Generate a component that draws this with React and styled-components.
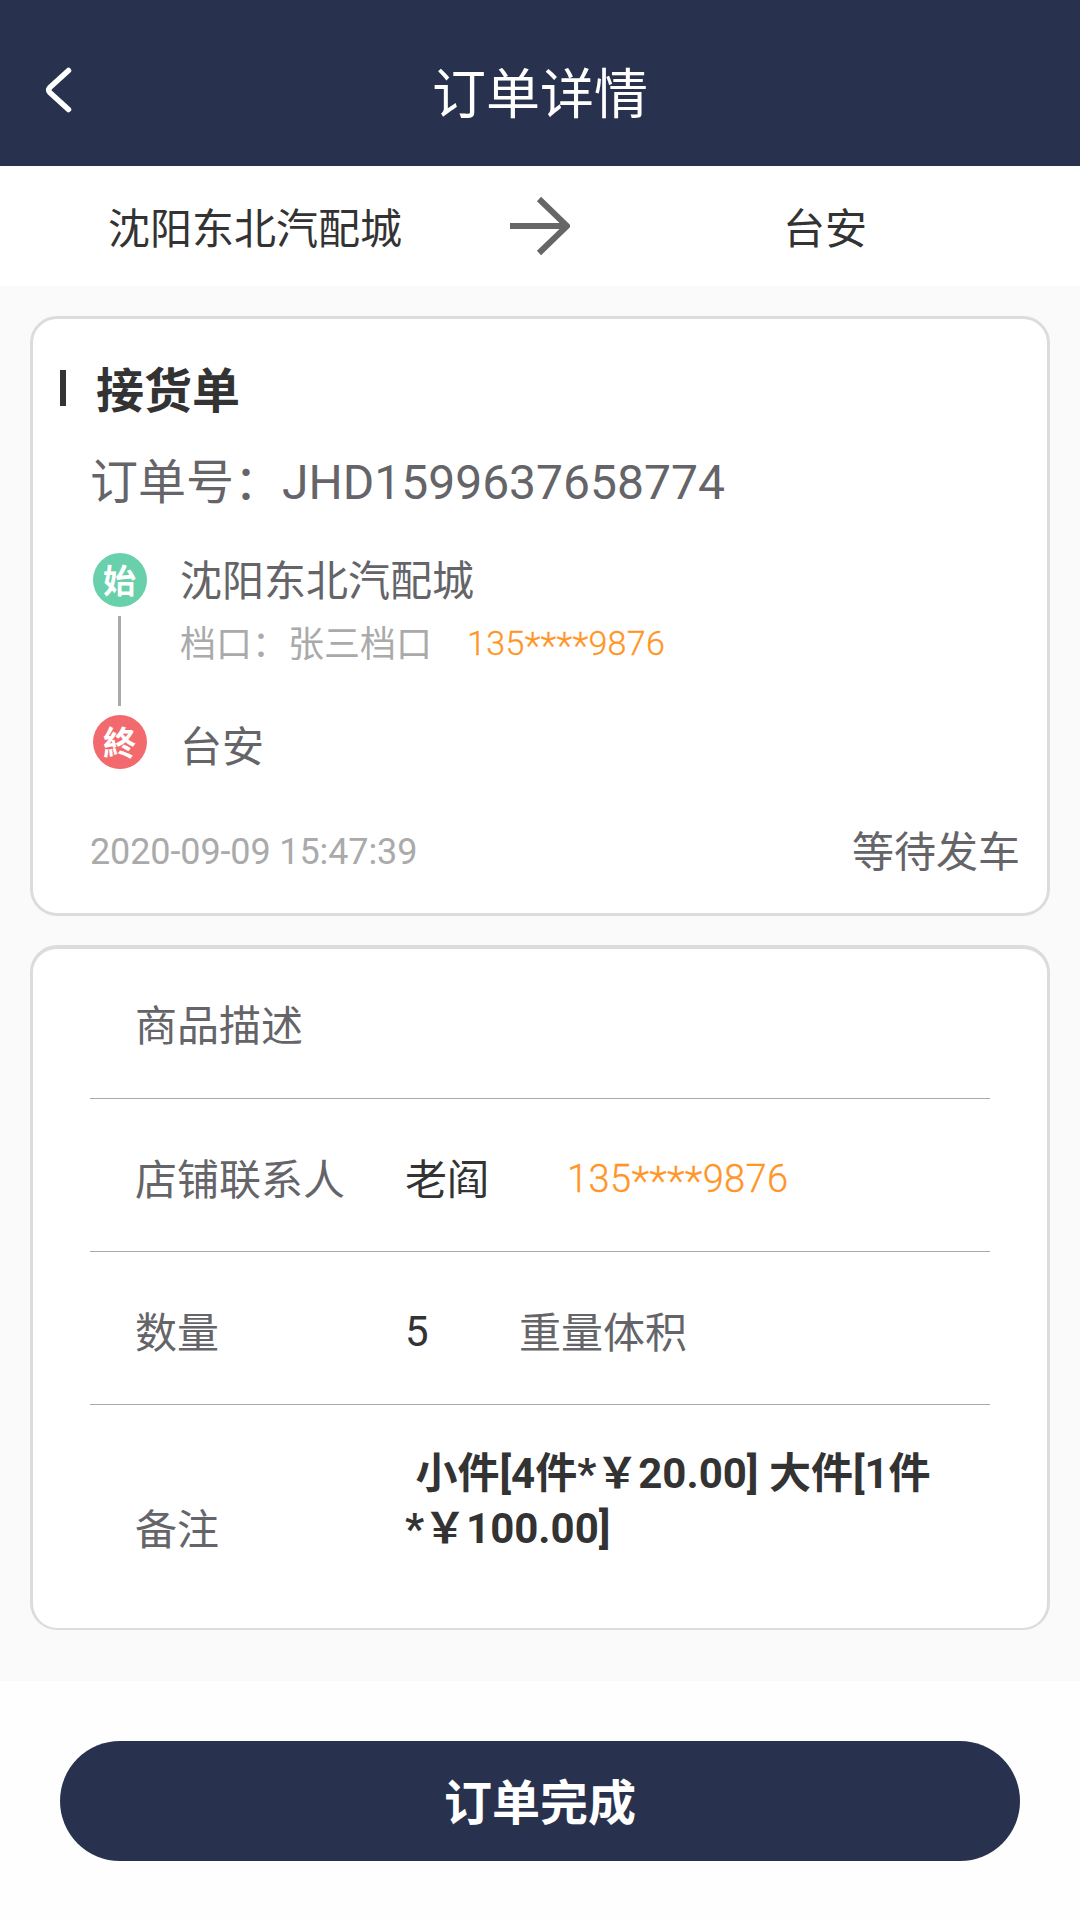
import React from 'react';
import styled, { createGlobalStyle } from 'styled-components';

const GlobalStyle = createGlobalStyle`
  * { box-sizing: border-box; }
  body {
    margin: 0;
    background: #fff;
    color: #333;
    font-family: Roboto, "Noto Sans CJK SC", sans-serif;
    font-size: 42px;
  }
`;

const Screen = styled.div`
  width: 1080px;
  height: 1920px;
  display: flex;
  flex-direction: column;
  overflow: hidden;
`;

const Header = styled.header`
  height: 166px;
  flex: none;
  padding: 26px 41px 0;
  display: grid;
  grid-template-columns: 36px 1fr 36px;
  align-items: center;
  background: #28314e;
  color: #fff;
`;

const BackIcon = styled.svg`
  width: 36px;
  height: 48px;
  margin-top: -12px;
  fill: none;
  stroke: #fff;
  stroke-width: 5.5;
  stroke-linecap: round;
  stroke-linejoin: round;
`;

const Title = styled.h1`
  margin: 0;
  font-size: 54px;
  line-height: 72px;
  font-weight: 400;
  text-align: center;
`;

const RouteBar = styled.div`
  height: 120px;
  flex: none;
  display: grid;
  grid-template-columns: 1fr 60px 1fr;
  align-items: center;
  text-align: center;
  line-height: 60px;
  padding-top: 8px;
`;

const ArrowIcon = styled.svg`
  width: 60px;
  height: 60px;
  margin-top: -8px;
  fill: none;
  stroke: #666;
  stroke-width: 6;
`;

const Content = styled.main`
  height: 1395px;
  flex: none;
  padding: 30px 30px 0;
  display: flex;
  flex-direction: column;
  gap: 29px;
  background: #fafafa;
`;

const Card = styled.section`
  height: ${(p) => p.$height}px;
  flex: none;
  border: 3px solid #dcdcdc;
  border-top-width: ${(p) => p.$top || 3}px;
  border-bottom-width: ${(p) => p.$bottom || 3}px;
  border-radius: 27px;
  background: #fff;
`;

const OrderHead = styled.div`
  height: 72px;
  margin-top: 33px;
  padding-left: 27px;
  display: flex;
  align-items: center;
  gap: 30px;
`;

const Tick = styled.i`
  width: 6px;
  height: 36px;
  background: #333;
`;

const Heading = styled.h2`
  margin: 0;
  padding-top: 8px;
  font-size: 48px;
  line-height: 72px;
  font-weight: 700;
`;

const OrderNo = styled.div`
  padding-left: 57px;
  margin-top: 23px;
  font-size: 48px;
  line-height: 72px;
  color: #646469;
`;

const Journey = styled.div`
  display: flex;
  margin-top: 34px;
  padding-left: 60px;
  gap: 33px;
`;

const Rail = styled.div`
  width: 54px;
  display: flex;
  flex-direction: column;
  align-items: center;
  gap: 9px;
`;

const Badge = styled.span`
  width: 54px;
  height: 54px;
  border-radius: 50%;
  background: ${(p) => p.$color};
  color: #fff;
  font-size: 33px;
  line-height: 57px;
  font-weight: 700;
  text-align: center;
  text-indent: -1px;
`;

const Line = styled.i`
  width: 3px;
  height: 90px;
  margin-right: 1px;
  background: #aaa;
`;

const Stops = styled.div`
  flex: 1;
  display: flex;
  flex-direction: column;
`;

const Place = styled.div`
  line-height: 60px;
  margin-top: ${(p) => p.$gap}px;
  color: #646469;
`;

const Stall = styled.div`
  height: 54px;
  display: flex;
  align-items: center;
  margin-top: 6px;
  gap: 35px;
  font-size: 36px;
  line-height: 54px;
  color: #aaa;
`;

const PhoneLink = styled.a`
  padding-bottom: ${(p) => p.$lift}px;
  font-size: ${(p) => p.$size}px;
  font-weight: 300;
  letter-spacing: 0.01em;
  color: #ff9526;
  -webkit-text-stroke: 0.3px #ff9526;
`;

const Mask = styled.span`
  font-size: 1.09em;
  line-height: 1;
  letter-spacing: 0.006em;
  vertical-align: -0.08em;
`;

const OrderFoot = styled.footer`
  margin-top: 43px;
  padding: 0 27px 0 57px;
  display: flex;
  align-items: center;
  justify-content: space-between;
  line-height: 60px;
  color: #646469;
`;

const Time = styled.time`
  font-size: 36px;
  letter-spacing: -0.12px;
  color: #aaa;
`;

const Status = styled.span`
  padding-top: 2px;
`;

const Row = styled.div`
  height: ${(p) => p.$height || 153}px;
  margin: 0 57px;
  padding: ${(p) => p.$top || 11}px 0 0 45px;
  display: flex;
  align-items: center;
  border-bottom: ${(p) => (p.$last ? 0 : 1)}px solid #aaa;
  line-height: 60px;
`;

const Label = styled.span`
  width: 270px;
  flex: none;
  color: #646469;
`;

const Value = styled.span`
  width: ${(p) => p.$width}px;
  flex: none;
  padding-bottom: ${(p) => p.$lift || 0}px;
`;

const Remark = styled.p`
  width: 540px;
  margin: 0 0 59px;
  font-weight: 700;
  line-height: 55px;
  white-space: pre-wrap;
`;

const Footer = styled.footer`
  flex: 1;
  padding: 60px;
  background: #fefefe;
`;

const DoneButton = styled.button`
  display: block;
  width: 100%;
  height: 120px;
  padding: 0 0 4px;
  border: 0;
  border-radius: 60px;
  background: #28314e;
  color: #fff;
  font: inherit;
  font-size: 48px;
  font-weight: 700;
`;

function Phone({ size, lift }) {
  return (
    <PhoneLink $size={size} $lift={lift}>
      135<Mask>****</Mask>9876
    </PhoneLink>
  );
}

export default function App() {
  return (
    <Screen>
      <GlobalStyle />
      <Header>
        <BackIcon viewBox="0 0 36 48">
          <path d="M27.500 4.500L8.800 21.500Q6.600 24 8.800 26.500L27.500 43.500" />
        </BackIcon>
        <Title>订单详情</Title>
      </Header>
      <RouteBar>
        <span>沈阳东北汽配城</span>
        <ArrowIcon viewBox="0 0 60 60">
          <path d="M0 30H56M29 3L57 30L29 57" />
        </ArrowIcon>
        <span>台安</span>
      </RouteBar>
      <Content>
        <Card $height={600}>
          <OrderHead>
            <Tick />
            <Heading>接货单</Heading>
          </OrderHead>
          <OrderNo>订单号：JHD1599637658774</OrderNo>
          <Journey>
            <Rail>
              <Badge $color="#68d0ab">始</Badge>
              <Line />
              <Badge $color="#f2696e">終</Badge>
            </Rail>
            <Stops>
              <Place $gap={-1}>沈阳东北汽配城</Place>
              <Stall>
                <span>档口：张三档口</span>
                <Phone size={34} lift={4} />
              </Stall>
              <Place $gap={46}>台安</Place>
            </Stops>
          </Journey>
          <OrderFoot>
            <Time>2020-09-09 15:47:39</Time>
            <Status>等待发车</Status>
          </OrderFoot>
        </Card>
        <Card $height={685} $top={4} $bottom={2}>
          <Row $height={150} $top={6}>
            <Label>商品描述</Label>
          </Row>
          <Row>
            <Label>店铺联系人</Label>
            <Value $width={162}>老阎</Value>
            <Phone size={38} lift={4} />
          </Row>
          <Row>
            <Label>数量</Label>
            <Value $width={114} $lift={3}>5</Value>
            <Label>重量体积</Label>
          </Row>
          <Row $height={223} $top={28} $last>
            <Label>备注</Label>
            <Remark>{' 小件[4件*￥20.00] 大件[1件*￥100.00]'}</Remark>
          </Row>
        </Card>
      </Content>
      <Footer>
        <DoneButton>订单完成</DoneButton>
      </Footer>
    </Screen>
  );
}
